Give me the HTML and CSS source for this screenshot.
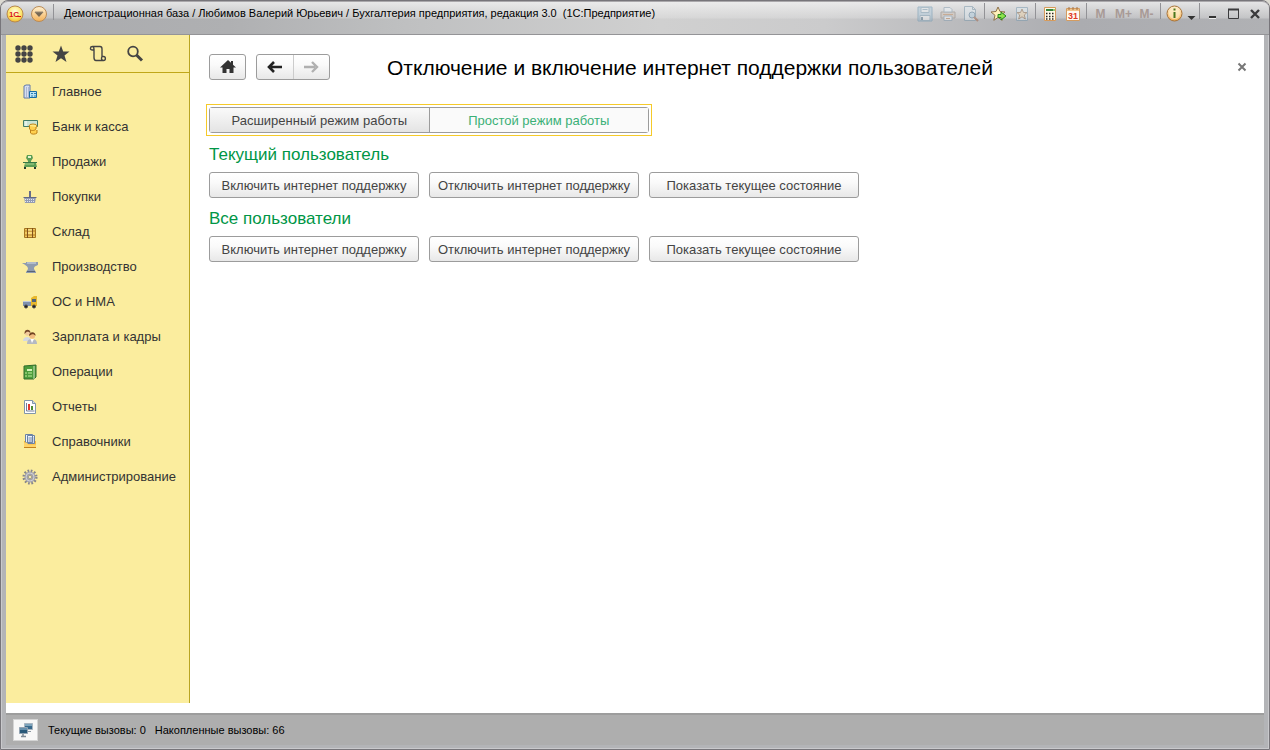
FILE: index.html
```html
<!DOCTYPE html>
<html lang="ru">
<head>
<meta charset="utf-8">
<title>Бухгалтерия предприятия</title>
<link rel="stylesheet" href="styles.css">
</head>
<body>
<div class="window">
  <header class="titlebar">
    <div class="brand">
      <button class="tb" aria-label="1С"><svg width="18" height="18" viewBox="0 0 18 18"><defs><radialGradient id="gy" cx=".5" cy=".35" r=".65"><stop offset="0" stop-color="#fffde0"/><stop offset=".6" stop-color="#fde873"/><stop offset="1" stop-color="#f3ba2e"/></radialGradient><linearGradient id="go" x2="0" y2="1"><stop offset="0" stop-color="#fff0cf"/><stop offset=".5" stop-color="#fbd296"/><stop offset="1" stop-color="#f3b055"/></linearGradient></defs><circle cx="9" cy="9" r="8" fill="url(#gy)" stroke="#b78950"/><text x="8" y="12" class="logotext">1С</text><path d="M10 11.500h5" stroke="#d9161c"/></svg></button>
      <button class="tb" aria-label="Меню"><svg width="18" height="18" viewBox="0 0 18 18"><circle cx="9" cy="9" r="7.500" fill="url(#go)" stroke="#b98b58"/><path d="M4.500 7h9L9 12z" fill="#776854"/><path d="M5 7h8" stroke="#9b8c78"/></svg></button>
      <span class="sep"></span>
    </div>
    <div class="caption">Демонстрационная база / Любимов Валерий Юрьевич / Бухгалтерия предприятия, редакция 3.0&nbsp; (1С:Предприятие)</div>
    <div class="tools">
      <button class="tb dim" aria-label="Сохранить"><svg width="16" height="16" viewBox="0 0 16 16"><path d="M1 1h14v14H1z" fill="#b0cadb" stroke="#6793b0"/><path d="M4 1.500h8v5H4z" fill="#e8edf0" stroke="#7c9fb5"/><path d="M5.500 3.500h5M3 9.500h10v5H3z" fill="#eceff1" stroke="#7c9fb5"/><path d="M5 11v3" stroke="#54748a" stroke-width="2"/></svg></button>
      <button class="tb dim" aria-label="Печать"><svg width="16" height="16" viewBox="0 0 16 16"><path d="M1 6h14v6H1z" fill="#cfc4bb" stroke="#8b8178"/><path d="M4 6V1.500h6l2 2V6z" fill="#ecf3f8" stroke="#849caf"/><path d="M4 10h8v4.500H4z" fill="#f1f3f5" stroke="#849caf"/><path d="M3 8.500h10M6 12.500h4" stroke="#c08758"/></svg></button>
      <button class="tb dim" aria-label="Просмотр"><svg width="16" height="16" viewBox="0 0 16 16"><path d="M1.500.500h8l3 3v11h-11z" fill="#dfe9ef" stroke="#7795a8"/><path d="M9.500.500v3h3" fill="none" stroke="#7795a8"/><circle cx="9" cy="9" r="3" fill="#b7d2e4" stroke="#587f9b"/><path d="m11 11 4 4" stroke="#a06144" stroke-width="2"/></svg></button>
      <span class="sep"></span>
      <button class="tb" aria-label="В избранное"><svg width="17" height="16" viewBox="0 0 17 16"><path d="m8 1 2 4.500 5 .500-4 3.300 1.200 5L8 11.500 3.800 14.300 5 9.300 1 6l5-.500z" fill="#fff1ba" stroke="#8d704a"/><path d="M8 8.500h3V6l5 4-5 4v-2.500H8z" fill="#8de34c" stroke="#27891c"/></svg></button>
      <button class="tb dim" aria-label="Избранное"><svg width="16" height="16" viewBox="0 0 16 16"><path d="M2.500 1.500h11v13h-11z" fill="#dce9ef" stroke="#7698ae"/><path d="m8 3 1.500 3.500H13L10.300 9l1 4L8 10.800 4.700 13l1-4L3 6.500h3.500z" fill="#edd4ac" stroke="#8c6c4e"/></svg></button>
      <span class="sep"></span>
      <button class="tb" aria-label="Калькулятор"><svg width="14" height="16" viewBox="0 0 14 16"><path d="M1.500 1.500h11v13h-11z" fill="#fffbe8" stroke="#d69b5c"/><path d="M3 4h7" stroke="#37823d" stroke-width="2"/><path d="M10 4h2" stroke="#8bcf74" stroke-width="2"/><path d="M3 7.500h8M3 10.500h8M3 13h8" stroke="#28231e" stroke-width="1.400" stroke-dasharray="1.500 1.500"/></svg></button>
      <button class="tb" aria-label="Календарь"><svg width="14" height="16" viewBox="0 0 14 16"><path d="M.500 2.500h13v12H.500z" fill="#fffaf0" stroke="#d39c61"/><path d="M1 3h12v2H1z" fill="#f0c58c"/><path d="M3 1v3M7 1v3M11 1v3" stroke="#a47347"/><text x="7" y="13" class="caltext">31</text></svg></button>
      <span class="sep"></span>
      <button class="tb mem">M</button><button class="tb mem">M+</button><button class="tb mem">M-</button>
      <span class="sep"></span>
      <button class="tb" aria-label="Справка"><svg width="17" height="17" viewBox="0 0 17 17"><circle cx="8.500" cy="8.500" r="7.500" fill="url(#go)" stroke="#a77339"/><circle cx="8.500" cy="8.500" r="5.500" fill="#fff3cf" opacity=".6"/><path d="M8.500 7v6M8.500 3.500v2" stroke="#4a771d" stroke-width="2"/></svg></button>
      <button class="tb narrow" aria-label="Ещё"><svg width="9" height="16" viewBox="0 0 9 16"><path d="M.500 10h8L4.500 14z" fill="#333"/></svg></button>
      <span class="sep"></span>
      <button class="tb wc" aria-label="Свернуть"><svg width="12" height="12" viewBox="0 0 12 12"><path d="M2 9h7" stroke="#333" stroke-width="2"/><path d="M2 10.500h7" stroke="#eee"/></svg></button>
      <button class="tb wc" aria-label="Развернуть"><svg width="12" height="12" viewBox="0 0 12 12"><path d="M.500 1.500h10v9H.500z" fill="none" stroke="#3b3b3d"/><path d="M0 1.500h11" stroke="#3b3b3d" stroke-width="2"/></svg></button>
      <button class="tb wc" aria-label="Закрыть"><svg width="12" height="12" viewBox="0 0 12 12"><path d="m2 2 8 8M10 2l-8 8" stroke="#3b3b3d" stroke-width="2.400"/></svg></button>
    </div>
  </header>

  <div class="work">
    <aside class="side">
      <div class="sidetools">
        <button class="st" aria-label="Разделы"><svg width="18" height="18" viewBox="0 0 18 18"><g fill="#444"><circle cx="3" cy="3" r="2.700"/><circle cx="9" cy="3" r="2.700"/><circle cx="15" cy="3" r="2.700"/><circle cx="3" cy="9" r="2.700"/><circle cx="9" cy="9" r="2.700"/><circle cx="15" cy="9" r="2.700"/><circle cx="3" cy="15" r="2.700"/><circle cx="9" cy="15" r="2.700"/><circle cx="15" cy="15" r="2.700"/></g></svg></button>
        <button class="st" aria-label="Избранное"><svg width="18" height="18" viewBox="0 0 18 18"><path d="m9 .500 2.200 6H17.500l-5 4 2 6.500L9 13.200 3.500 17l2-6.500-5-4h6.300z" fill="#444"/></svg></button>
        <button class="st" aria-label="История"><svg width="18" height="18" viewBox="0 0 18 18"><path d="M5 5H3.500C.500 5 1 1.500 3.500 1.500H11C12.500 1.500 13 3 13 4v7.500h1.500c2.500 0 2.500 4 0 4H7c-1.500 0-2-1.500-2-3zM3.500 1.500C5 1.500 5 3 5 5M14.500 15.500c-2 0-2.500-2-1.500-4" fill="none" stroke="#444" stroke-width="1.400"/></svg></button>
        <button class="st" aria-label="Поиск"><svg width="18" height="18" viewBox="0 0 18 18"><circle cx="7" cy="6.500" r="4.800" fill="none" stroke="#444" stroke-width="1.800"/><path d="m10.500 10 5.500 5.500" stroke="#444" stroke-width="3"/></svg></button>
      </div>
      <nav class="nav">
        <a href="#"><svg viewBox="0 0 16 16"><path d="M2 14V2l2-1h4v13z" fill="#d6def0" stroke="#6079a8"/><path d="M4 4h3M4 6h3M4 8h3M4 10h3M4 12h3" stroke="#8293b7" stroke-dasharray="1 1"/><path d="M7.500 7.500h7v6h-7z" fill="#bce3f5" stroke="#196da5"/><path d="M9 9.500h5M9 12h5" stroke="#2880b5" stroke-dasharray="2 1"/></svg>Главное</a>
        <a href="#"><svg viewBox="0 0 16 16"><path d="M1.500 1.500h14v6h-14z" fill="#cbe4d4" stroke="#427b66"/><path d="M4 2v5" stroke="#fff"/><ellipse cx="11" cy="7" rx="4" ry="2" fill="#ffe984" stroke="#c18719"/><path d="M7.500 7v3c1 2 5 2 6.500 0V8M8.500 11v3c1 1.500 5 1.500 6.500 0v-3" fill="#ffd04e" stroke="#bd8119"/></svg>Банк и касса</a>
        <a href="#"><svg viewBox="0 0 16 16"><path d="M5 1h5l1 3-2 3v2h5l1 4H2l1-4h3V7L4 4z" fill="#5b9e54"/><path d="M6 3h3" stroke="#e5f3ce" stroke-width="2"/><path d="M1 8.500h14" stroke="#377744"/><path d="M3 10h9" stroke="#a9d28c"/><path d="M2 14h2M12 14h2" stroke="#263a2b" stroke-width="2"/></svg>Продажи</a>
        <a href="#"><svg viewBox="0 0 16 16"><path d="M8 2v7" stroke="#666c89" stroke-width="2"/><path d="M2 8h12l-1 6H3z" fill="#929bb3"/><path d="M1.500 8.500h13" stroke="#616985"/><path d="M3 10.500h10M3 12.500h10" stroke="#e2e6ee" stroke-dasharray="1 1"/></svg>Покупки</a>
        <a href="#"><svg viewBox="0 0 16 16"><path d="M2.500 4.500h11v9h-11z" fill="#f2c85e" stroke="#a37320"/><path d="M2 7h12M2 11h12" stroke="#b17d22"/><path d="M5.500 4v10M10.500 4v10" stroke="#82521b"/><path d="M6 6h4M6 9h4" stroke="#fff0a1"/></svg>Склад</a>
        <a href="#"><svg viewBox="0 0 16 16"><path d="M0 4h4V3h12v3c-2 1-4 1-4 4l2 3v1H4v-1l2-3c0-3-3-4-6-6z" fill="#8f9caf"/><path d="M5 4h9" stroke="#d3dce7"/><path d="M5 12.500h8" stroke="#586477"/></svg>Производство</a>
        <a href="#"><svg viewBox="0 0 16 16"><path d="M1 7h8v5H1z" fill="#7e91ae"/><path d="M1 7.500h8" stroke="#c1ccda"/><path d="M9 12V4l3-2h3v10z" fill="#e7b82d"/><path d="M10 5h4v3h-4z" fill="#526579"/><circle cx="4" cy="12.500" r="1.500" fill="#222" stroke="#444"/><circle cx="12" cy="12.500" r="1.500" fill="#222" stroke="#444"/></svg>ОС и НМА</a>
        <a href="#"><svg viewBox="0 0 16 16"><path d="M1 12c0-3 2-4 4-4s4 1 4 4z" fill="#d4d8e0"/><circle cx="5.500" cy="4" r="2.700" fill="#f2cb9c"/><path d="M2.500 5c-.5-6 6.500-5 6-1-2-1.500-3-1.500-4-1z" fill="#75482a"/><path d="M5 15c0-4 2-5 5-5s5 1 5 5z" fill="#b5b9c2"/><circle cx="10.200" cy="7" r="2.800" fill="#f2bc80"/><path d="M7 7c0-5 7-5 6.500 0-1-2-3-2-4-1.500z" fill="#70411f"/><path d="m8.500 10 1.500 4 2-4z" fill="#fff"/></svg>Зарплата и кадры</a>
        <a href="#"><svg viewBox="0 0 16 16"><path d="M2 2 14 1v12l-2 2H2z" fill="#4c9c3b" stroke="#326c2c"/><path d="M12 2v13" stroke="#cce2bc"/><path d="M5 5h5v2H5z" fill="#d5f4ba"/><path d="M3 9h2M6 9h4M3 12h2M6 12h4" stroke="#bfed9c"/></svg>Операции</a>
        <a href="#"><svg viewBox="0 0 16 16"><path d="M2.500 1.500h8l3 3v10h-11z" fill="#fff" stroke="#8196aa"/><path d="M10.500 1.500v3h3" fill="#cedae5" stroke="#8196aa"/><path d="M4.500 4v8h8" fill="none" stroke="#747f98"/><path d="M7 5v6" stroke="#e0382f" stroke-width="2"/><path d="M10 7v4" stroke="#4d8f35" stroke-width="2"/></svg>Отчеты</a>
        <a href="#"><svg viewBox="0 0 16 16"><path d="M2 7h12v7H2z" fill="#f6ba39"/><path d="M3.500.500h7v8h-7zM5.500 1.500h7v8h-7z" fill="#edf3fb" stroke="#6a82a4"/><path d="M6.500 4h5M6.500 6h5M6.500 8h5" stroke="#7186a9"/><path d="M2 8.500h3l1 2h8v3H2z" fill="#ffd468"/><path d="M2 13.500h12" stroke="#c1821d"/></svg>Справочники</a>
        <a href="#"><svg viewBox="0 0 16 16"><circle cx="8" cy="8" r="6.300" fill="none" stroke="#85858c" stroke-width="2.500" stroke-dasharray="1.700 1.600"/><circle cx="8" cy="8" r="3.800" fill="none" stroke="#a5a5ac" stroke-width="3.400"/><circle cx="8" cy="8" r="4" fill="none" stroke="#cfcfd4"/><circle cx="8" cy="8" r="1.800" fill="#f4eab0" stroke="#777780" stroke-width=".7"/></svg>Администрирование</a>
      </nav>
    </aside>

    <main class="main">
      <div class="head">
        <button class="btn hb" aria-label="Начальная страница"><svg width="16" height="14" viewBox="0 0 16 14"><path d="M8 0 0 7.500h2.500V13h4V9h3v4h4V7.500H16L13 4.700V1h-2v1.800z" fill="#333"/></svg></button>
        <div class="btn pair">
          <button aria-label="Назад"><svg width="16" height="12" viewBox="0 0 16 12"><path d="M15 6H4M7 1 2 6l5 5" fill="none" stroke="#222" stroke-width="2.600"/></svg></button>
          <button aria-label="Вперед" disabled><svg width="16" height="12" viewBox="0 0 16 12"><path d="M1 6h11M9 1l5 5-5 5" fill="none" stroke="#b0b0b0" stroke-width="2.400"/></svg></button>
        </div>
        <h1>Отключение и включение интернет поддержки пользователей</h1>
        <button class="close" aria-label="Закрыть"><svg width="10" height="10" viewBox="0 0 10 10"><path d="m1.500 1.500 7 7M8.500 1.500l-7 7" stroke="#777" stroke-width="2"/></svg></button>
      </div>
      <div class="focus"><div class="seg"><button>Расширенный режим работы</button><button class="on">Простой режим работы</button></div></div>
      <h2>Текущий пользователь</h2>
      <div class="row"><button class="btn">Включить интернет поддержку</button><button class="btn">Отключить интернет поддержку</button><button class="btn">Показать текущее состояние</button></div>
      <h2>Все пользователи</h2>
      <div class="row"><button class="btn">Включить интернет поддержку</button><button class="btn">Отключить интернет поддержку</button><button class="btn">Показать текущее состояние</button></div>
    </main>
  </div>

  <footer class="status">
    <button class="net" aria-label="Вызовы сервера"><svg width="16" height="16" viewBox="0 0 16 16"><path d="M6.500 1.500h8v6h-8z" fill="#37698c" stroke="#a7b4c0"/><path d="M7 2h7v2H7z" fill="#7da4bc"/><path d="M9 9.500h4" stroke="#8b96a0"/><path d="M1.500 5.500h8v6h-8z" fill="#285879" stroke="#92a3b2"/><path d="M2 6h7v2H2z" fill="#6690ad"/><path d="M5 12v2M3 14.500h5" stroke="#7d8994" stroke-width="1.500"/></svg></button>
    <span>Текущие вызовы: 0</span><span>Накопленные вызовы: 66</span>
  </footer>
</div>
</body>
</html>
```
FILE: styles.css
```css
* { box-sizing: border-box; }
body { margin: 0; background: #dcdad2; font-family: "Liberation Sans", Arial, sans-serif; font-size: 13px; color: #333; }
button { font: inherit; color: inherit; margin: 0; padding: 0; border: 0; background: none; display: flex; align-items: center; justify-content: center; }
svg { display: block; flex: none; }
.window {
  min-height: 100vh; display: flex; flex-direction: column;
  padding: 0 4px 4px; border: 1px solid #77757a; border-radius: 8px 8px 0 0;
  background: #b3b4b7;
  box-shadow: inset 0 0 0 1px #c9c9cc;
}
.titlebar {
  display: flex; align-items: flex-start; height: 34px; margin: 0 -4px; padding: 1px 4px 0 2px;
  border-radius: 7px 7px 0 0; border-top: 1px solid #aaa8ab; border-bottom: 1px solid #949497;
  background:
    linear-gradient(#f2f2f2cc, #e2e2e266 16px, transparent 17px),
    linear-gradient(90deg, #a9aaad 0, #afb0b2 18%, #bfc0c1 32%, #d0d0d0 52%, #cbcbcc 65%, #abacb0 85%, #b0b1b4 100%);
}
.tb { width: 23px; height: 21px; }
.brand { display: flex; gap: 1px; }
.brand .sep { margin: 1px 10px 0 2px; }
.sep { width: 1px; height: 16px; margin: 0 2px; background: #929296; }
.caption { flex: 1; font-size: 11px; line-height: 21px; color: #000; white-space: nowrap; }
.tools { display: flex; }
.dim { opacity: .5; }
.mem { font-size: 12px; font-weight: bold; color: #a89a96; }
.narrow { width: 11px; }
.wc { width: 21px; }
.caltext { font-size: 9px; font-weight: bold; fill: #e03a24; text-anchor: middle; }
.logotext { font-size: 8px; font-weight: bold; fill: #d9161c; text-anchor: middle; }
.work { flex: 1; display: flex; margin: 0 1px; background: #fff; }
.side { width: 184px; flex: none; margin-bottom: 10px; background: #fbed9e; border-right: 1px solid #b9a522; }
.sidetools { display: flex; gap: 1px; height: 38px; border-bottom: 1px solid #c0a719; }
.sidetools .st { width: 36px; height: 37px; }
.nav { display: flex; flex-direction: column; padding-top: 1px; }
.nav a { display: flex; align-items: center; gap: 14px; height: 35px; padding-left: 16px; color: #333; text-decoration: none; }
.nav svg { width: 16px; height: 16px; }
.main { flex: 1; padding: 19px 15px 0 19px; }
.head { display: flex; align-items: center; gap: 10px; height: 26px; }
.btn { height: 26px; border: 1px solid #9c9c9c; border-radius: 3px; background: linear-gradient(#fff, #fafafa 40%, #e8e8e8); color: #444; }
.hb { width: 37px; }
.pair { display: flex; width: 74px; }
.pair button { flex: 1; }
.pair button + button { border-left: 1px solid #ccc; }
.head h1 { flex: 1; margin: 0 0 0 47px; font-size: 21px; font-weight: normal; line-height: 28px; padding-top: 2px; color: #000; }
.close { width: 14px; height: 26px; }
.focus { width: 446px; margin: 24px 0 0 -3px; padding: 2px; border: 1px solid #f5ca2a; }
.seg { display: flex; height: 26px; border: 1px solid #9c9c9c; border-radius: 3px; background: #fafafa; }
.seg button { flex: 1; color: #444; background: linear-gradient(#fafafa, #e4e4e4); border-right: 1px solid #9c9c9c; }
.seg .on { color: #3bb077; background: #fafafa; border-right: 0; }
h2 { margin: 9px 0 7px; font-size: 17px; font-weight: normal; line-height: 20px; color: #009646; }
.row { display: flex; gap: 10px; margin-bottom: 11px; }
.row .btn { width: 210px; }
.status { display: flex; align-items: center; gap: 9px; height: 32px; margin: 0 1px; padding-left: 7px; border-top: 2px solid #9d9d9d; background: #aeaeae; font-size: 11px; color: #000; }
.net { width: 25px; height: 22px; margin-right: 1px; background: #f7f7f7; border: 1px solid #d4d4d4; }
```
